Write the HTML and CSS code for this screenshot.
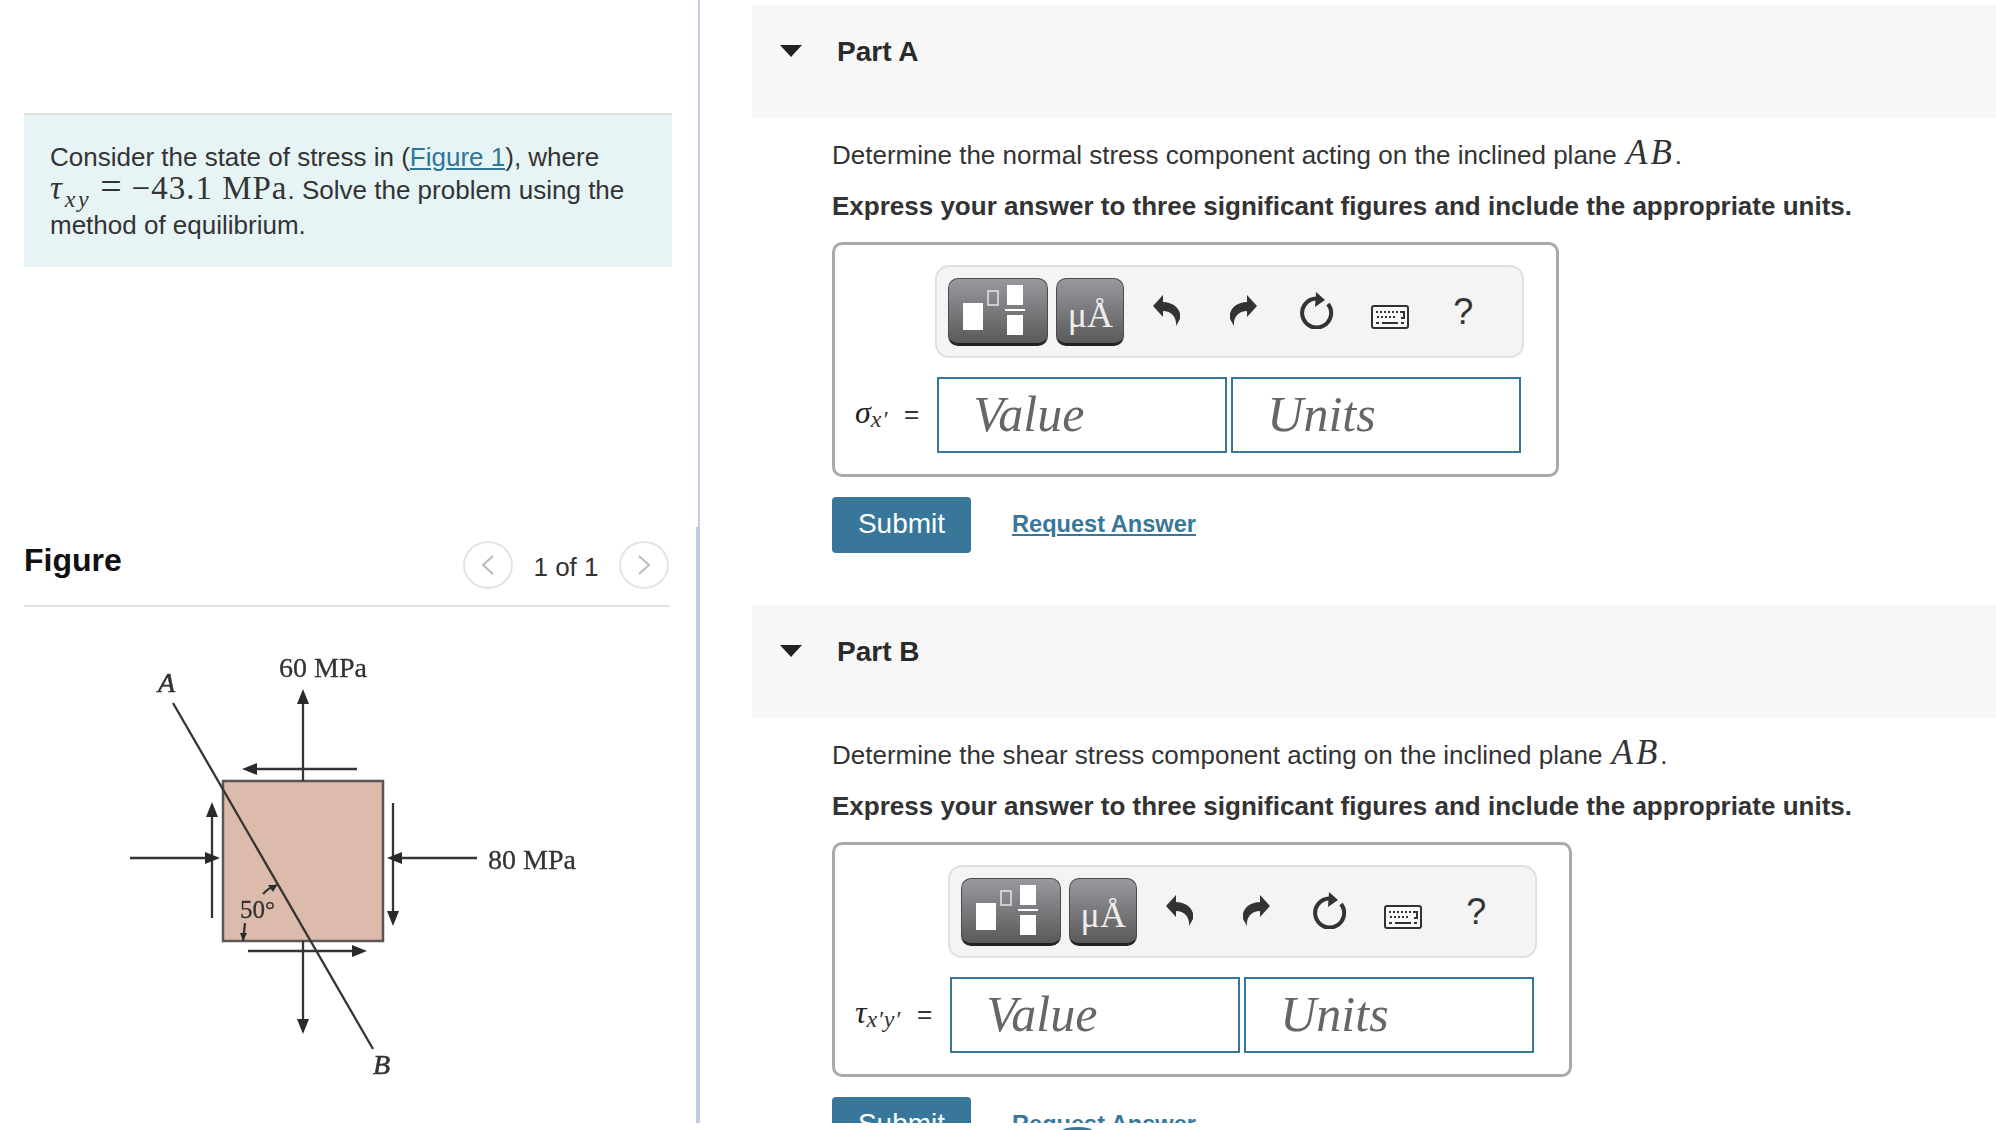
FILE: index.html
```html
<!DOCTYPE html>
<html lang="en">
<head>
<meta charset="utf-8">
<title>Stress problem</title>
<link rel="stylesheet" href="styles.css">
</head>
<body>
<div class="page">
  <aside class="left">
    <div class="intro">
      <p class="ln">Consider the state of stress in (<a class="link" href="#">Figure 1</a>), where</p>
      <p class="ln ln-math"><span class="imath"><i class="greek">τ</i><sub class="isub">xy</sub><span class="eq">=</span><span class="val">−43.1 MPa</span></span>. Solve the problem using the</p>
      <p class="ln ln-last">method of equilibrium.</p>
    </div>
    <div class="fig-head">
      <h2 class="fig-title">Figure</h2>
      <div class="pager">
        <span class="pager-btn"><svg class="chev" viewBox="0 0 16 24"><path d="M13 3 3 12l10 9"/></svg></span>
        <span class="pager-label">1 of 1</span>
        <span class="pager-btn"><svg class="chev" viewBox="0 0 16 24"><path d="M3 3l10 9-10 9"/></svg></span>
      </div>
    </div>
    <svg class="diagram" viewBox="24 640 646 470">
      <rect class="block" x="223" y="781" width="160" height="160"/>
      <g class="lines">
        <line x1="173" y1="703" x2="373" y2="1049"/>
        <line x1="303" y1="781" x2="303" y2="700"/>
        <line x1="357" y1="769" x2="250" y2="769"/>
        <line x1="212" y1="918" x2="212" y2="812"/>
        <line x1="130" y1="858" x2="212" y2="858"/>
        <line x1="477" y1="858" x2="395" y2="858"/>
        <line x1="393" y1="803" x2="393" y2="916"/>
        <line x1="303" y1="941" x2="303" y2="1024"/>
        <line x1="248" y1="951" x2="358" y2="951"/>
        <path d="M263 894q5-6 14-9M245 923l-2 18"/>
      </g>
      <g class="heads">
        <polygon points="303,689 297,704 309,704"/>
        <polygon points="242,769 257,763 257,775"/>
        <polygon points="212,802 206,817 218,817"/>
        <polygon points="220,858 205,852 205,864"/>
        <polygon points="387,858 402,852 402,864"/>
        <polygon points="393,926 387,911 399,911"/>
        <polygon points="303,1034 297,1019 309,1019"/>
        <polygon points="367,951 352,945 352,957"/>
        <polygon points="277,885 268,885 273,892"/>
        <polygon points="243,941 240,933 247,933"/>
      </g>
      <text class="fig-label" x="279" y="677">60 MPa</text>
      <text class="fig-label" x="488" y="869">80 MPa</text>
      <text class="fig-label small" x="240" y="918">50°</text>
      <text class="fig-label ital" x="158" y="692">A</text>
      <text class="fig-label ital" x="373" y="1074">B</text>
    </svg>
  </aside>

  <main class="right">
    <section class="part">
      <header class="part-head"><span class="caret"></span><h3 class="part-title">Part A</h3></header>
      <div class="part-body">
        <p class="prompt">Determine the normal stress component acting on the inclined plane <span class="ab">AB</span>.</p>
        <p class="instr">Express your answer to three significant figures and include the appropriate units.</p>
        <div class="answer">
          <div class="toolbar">
            <span class="tb-btn tb-frac"><svg class="frac" viewBox="1 1 98 64"><rect class="fw" x="15" y="25" width="20" height="27"/><rect class="fo" x="40" y="13" width="10" height="14"/><rect class="fw" x="59" y="7" width="16" height="20"/><rect class="fw" x="57" y="31" width="20" height="2"/><rect class="fw" x="59" y="37" width="16" height="20"/></svg></span>
            <span class="tb-btn tb-unit">μÅ</span>
            <svg class="ic undo" viewBox="0 0 27 31"><path d="M0 11 10 0v7c11 0 19 8 17 17l-4 7c1-8-4-15-13-15v6z"/></svg>
            <svg class="ic redo" viewBox="0 0 27 31"><path d="M0 11 10 0v7c11 0 19 8 17 17l-4 7c1-8-4-15-13-15v6z"/></svg>
            <svg class="ic reset" viewBox="0 0 34 37"><path class="ring" d="M28 12a14.500 14.500 0 1 1-11.500-5.500"/><polygon class="ringhead" points="16,0 25,8 15,15"/></svg>
            <svg class="ic kbd" viewBox="0 0 38 24"><rect class="kb-body" x="1" y="1" width="36" height="22" rx="2"/><path class="kb-keys" d="M5 7h2M9 7h2M13 7h2M17 7h2M21 7h2M25 7h2M29 7h4v6h-3M6 12h2M10 12h2M14 12h2M18 12h2M22 12h2M5 18h3M11 18h16M30 18h3"/></svg>
            <span class="help">?</span>
          </div>
          <div class="lhs"><i class="greek">σ</i><sub class="lsub">x′</sub><span class="lhs-eq">=</span></div>
          <div class="fields"><div class="field">Value</div><div class="field">Units</div></div>
        </div>
        <div class="actions"><a class="submit" href="#">Submit</a><a class="request" href="#">Request Answer</a></div>
      </div>
    </section>

    <section class="part">
      <header class="part-head"><span class="caret"></span><h3 class="part-title">Part B</h3></header>
      <div class="part-body">
        <p class="prompt">Determine the shear stress component acting on the inclined plane <span class="ab">AB</span>.</p>
        <p class="instr">Express your answer to three significant figures and include the appropriate units.</p>
        <div class="answer">
          <div class="toolbar">
            <span class="tb-btn tb-frac"><svg class="frac" viewBox="1 1 98 64"><rect class="fw" x="15" y="25" width="20" height="27"/><rect class="fo" x="40" y="13" width="10" height="14"/><rect class="fw" x="59" y="7" width="16" height="20"/><rect class="fw" x="57" y="31" width="20" height="2"/><rect class="fw" x="59" y="37" width="16" height="20"/></svg></span>
            <span class="tb-btn tb-unit">μÅ</span>
            <svg class="ic undo" viewBox="0 0 27 31"><path d="M0 11 10 0v7c11 0 19 8 17 17l-4 7c1-8-4-15-13-15v6z"/></svg>
            <svg class="ic redo" viewBox="0 0 27 31"><path d="M0 11 10 0v7c11 0 19 8 17 17l-4 7c1-8-4-15-13-15v6z"/></svg>
            <svg class="ic reset" viewBox="0 0 34 37"><path class="ring" d="M28 12a14.500 14.500 0 1 1-11.500-5.500"/><polygon class="ringhead" points="16,0 25,8 15,15"/></svg>
            <svg class="ic kbd" viewBox="0 0 38 24"><rect class="kb-body" x="1" y="1" width="36" height="22" rx="2"/><path class="kb-keys" d="M5 7h2M9 7h2M13 7h2M17 7h2M21 7h2M25 7h2M29 7h4v6h-3M6 12h2M10 12h2M14 12h2M18 12h2M22 12h2M5 18h3M11 18h16M30 18h3"/></svg>
            <span class="help">?</span>
          </div>
          <div class="lhs"><i class="greek">τ</i><sub class="lsub">x′y′</sub><span class="lhs-eq">=</span></div>
          <div class="fields"><div class="field">Value</div><div class="field">Units</div></div>
        </div>
        <div class="actions"><a class="submit" href="#">Submit</a><a class="request" href="#">Request Answer</a></div>
      </div>
    </section>
  </main>
</div>
<span class="peek"></span>
</body>
</html>
```

FILE: styles.css
```css
* { box-sizing: border-box; }
html, body { margin: 0; height: 1130px; overflow: hidden; background: #fff; }
body { position: relative; font-family: "Liberation Sans", Arial, sans-serif; font-size: 26px; color: #333; }
p, h2, h3 { margin: 0; }
.page { display: flex; width: 1996px; height: 1123px; overflow: hidden; }

.left { position: relative; flex: 0 0 698px; padding: 113px 28px 0 24px; border-right: 2px solid #c4d0e3; }
.left::after { content: ""; position: absolute; top: 527px; bottom: 0; right: -2px; width: 4px; background: #bccbdf; }

.intro { height: 154px; margin-right: -2px; background: #e7f4f6; border-top: 2px solid #e0e0e0; padding: 25px 26px 0; }
.ln { height: 34px; line-height: 34px; white-space: nowrap; }
.ln-math { margin-top: -1px; }
.ln-last { margin-top: 1px; }
.link { color: #2f7699; text-decoration: underline; }
.imath { font-family: "Liberation Serif", serif; font-size: 33px; line-height: 20px; color: #333; }
.greek { font-family: "Liberation Serif", serif; font-style: italic; }
.isub { margin-left: 3px; font-size: 24px; font-style: italic; line-height: 0; letter-spacing: 2.500px; }
.eq { margin: 0 10px 0 9px; font-size: 38px; line-height: 20px; }
.val { letter-spacing: 1px; }

.fig-head { display: flex; justify-content: space-between; align-items: flex-start; height: 340px; padding-top: 274px; border-bottom: 2px solid #e0e0e0; }
.fig-title { margin-top: 1px; font-size: 32px; font-weight: 700; color: #111; line-height: 36px; }
.pager { display: flex; align-items: center; height: 48px; margin-right: 1px; }
.pager-btn { display: flex; align-items: center; justify-content: center; width: 50px; height: 48px; border: 2px solid #e4e4e4; border-radius: 50%; }
.pager-label { width: 106px; text-align: center; color: #333; line-height: 48px; padding-top: 4px; }
.chev { width: 16px; height: 24px; fill: none; stroke: #bdbdbd; stroke-width: 2.200; }

.diagram { display: block; width: 646px; height: 470px; margin-top: 33px; filter: blur(0.45px); }
.block { fill: #dcbbac; stroke: #5b5554; stroke-width: 2.500; }
.lines line, .lines path { stroke: #353535; stroke-width: 2.300; fill: none; }
.heads polygon { fill: #2a2a2a; }
.fig-label { font-family: "Liberation Serif", serif; font-size: 28px; fill: #333; stroke: #333; stroke-width: 0.300; }
.fig-label.small { font-size: 25px; }
.fig-label.ital { font-style: italic; stroke-width: 0.600; }

.right { flex: 1; min-width: 0; padding: 5px 0 0 52px; }
.part { height: 600px; }
.part-head { display: flex; height: 113px; padding: 0 0 0 28px; background: #f8f8f8; }
.caret { width: 0; height: 0; margin-top: 40px; border-style: solid; border-width: 12px 11px 0; border-color: #222 transparent transparent; }
.part-title { margin: 28px 0 0 35px; font-size: 28px; font-weight: 700; line-height: 38px; color: #2a2a2a; }
.part-body { padding: 20px 0 0 80px; }
.prompt, .instr { line-height: 34px; }
.instr { margin-top: 17px; font-weight: 700; color: #333; }
.ab { margin-left: 2px; font-family: "Liberation Serif", serif; font-style: italic; font-size: 35px; letter-spacing: 3px; line-height: 20px; }

.answer { display: inline-grid; grid-template-columns: auto auto; align-items: center; margin-top: 19px; padding: 20px 32px 21px 18px; border: 3px solid #a9a9a9; border-radius: 10px; vertical-align: top; }
.toolbar { grid-column: 2; display: flex; align-items: center; height: 93px; width: 589px; padding-left: 11px; background: #f4f4f4; border: 2px solid #e0e0e0; border-radius: 14px; }
.tb-btn { display: flex; height: 68px; background: linear-gradient(#99989f, #5a5a5a); border: 1px solid #4a4a4a; border-bottom: 3px solid #222; border-radius: 10px; }
.tb-frac { width: 100px; }
.tb-unit { width: 68px; margin-left: 8px; justify-content: center; align-items: flex-end; padding-bottom: 7px; font-family: "Liberation Serif", serif; font-size: 36px; line-height: 42px; color: #eee; }
.frac { display: block; width: 98px; height: 64px; }
.fw { fill: #fff; }
.fo { fill: none; stroke: #e6e6e6; stroke-width: 1.500; }
.ic { display: block; flex: none; }
.undo, .redo { width: 27px; height: 31px; margin-bottom: 2px; fill: #333; }
.undo { margin-left: 29px; }
.redo { margin-left: 50px; transform: scaleX(-1); }
.reset { width: 34px; height: 37px; margin: 0 0 2px 43px; }
.ring { fill: none; stroke: #333; stroke-width: 4; }
.ringhead { fill: #333; }
.kbd { width: 38px; height: 24px; margin: 10px 0 0 37px; }
.kb-body { fill: #fafafa; stroke: #333; stroke-width: 2; }
.kb-keys { fill: none; stroke: #333; stroke-width: 2; }
.help { margin-left: 44px; font-size: 36px; line-height: 40px; color: #333; }

.lhs { grid-row: 2; grid-column: 1; display: flex; align-items: baseline; padding-left: 2px; margin-top: 14px; white-space: nowrap; font-size: 26px; }
.lhs .greek { font-size: 32px; color: #222; }
.lsub { font-family: "Liberation Serif", serif; font-style: italic; font-size: 24px; letter-spacing: 0.700px; line-height: 0; position: relative; top: 4px; }
.lhs-eq { margin: 0 16px; font-size: 26px; }
.fields { grid-row: 2; grid-column: 2; display: flex; gap: 4px; margin: 19px 0 0 2px; }
.field { width: 290px; height: 76px; padding-left: 34px; border: 2px solid #38779a; font-family: "Liberation Serif", serif; font-style: italic; font-size: 50px; line-height: 70px; color: #666; }

.actions { display: flex; align-items: center; margin-top: 20px; }
.submit { display: block; width: 139px; height: 56px; background: #38779a; border-radius: 4px; color: #fff; font-size: 28px; line-height: 54px; text-align: center; text-decoration: none; }
.request { margin: 0 0 2px 41px; font-size: 23.600px; font-weight: 700; color: #38779a; text-decoration: underline; }

.peek { position: absolute; left: 1063px; top: 1127px; width: 29px; height: 3px; border-radius: 50% 50% 0 0 / 100% 100% 0 0; background: #38779a; }
```
